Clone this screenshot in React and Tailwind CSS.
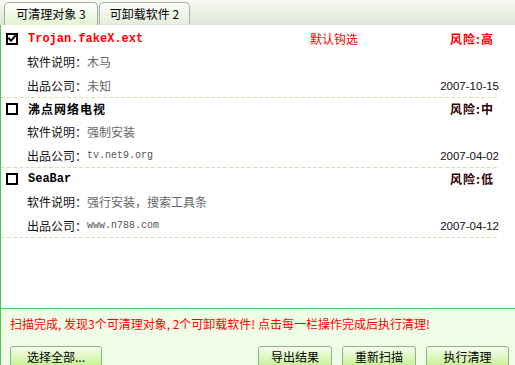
import React from "react";

const CJK = { fontFamily: '"Noto Sans CJK SC", "Noto Sans", sans-serif' };
const MONO = { fontFamily: '"Liberation Mono", "Noto Sans CJK SC", monospace' };
const SANS = { fontFamily: '"Liberation Sans", Arial, sans-serif' };

function Check({ checked }) {
  return (
    <svg width="12" height="12" viewBox="0 0 12 12" className="shrink-0">
      <rect x="1" y="1" width="10" height="10" fill="#fff" stroke="#000" strokeWidth="2" />
      {checked && (
        <path d="M3 5.5 L5 7.8 L9 3.2" fill="none" stroke="#000" strokeWidth="2" strokeLinecap="square" />
      )}
    </svg>
  );
}

function Block({ checked, title, titleMono, titleRed, flag, risk, riskRed, desc, company, companyMono, date }) {
  return (
    <div className="mr-[16px]">
      <div className="h-[22px] flex items-center pl-[5px]">
        <Check checked={checked} />
        <div
          className={`ml-[10px] w-[282px] text-[12px] leading-[16px] font-bold ${titleRed ? "text-[#ff0000]" : "text-black"} ${titleMono ? "" : "tracking-[1px]"}`}
          style={titleMono ? MONO : CJK}
        >
          {title}
        </div>
        <div className="text-[12px] leading-[16px] text-[#ff0000]" style={CJK}>
          {flag}
        </div>
        <div className="flex-1" />
        <div
          className={`pr-[5px] text-[12px] leading-[16px] font-bold tracking-[1px] ${riskRed ? "text-[#ff0000]" : "text-[#330000]"}`}
          style={CJK}
        >
          风险:{risk}
        </div>
      </div>
      <div className="h-[24px] flex items-center pl-[26px] text-[12px] leading-[16px]" style={CJK}>
        <span className="text-[#111]">软件说明：</span>
        <span className="text-[#666]">{desc}</span>
      </div>
      <div className="h-[23px] flex items-center pl-[26px] text-[12px] leading-[16px]" style={CJK}>
        <span className="text-[#111]">出品公司：</span>
        <span className={companyMono ? "text-[10px] text-[#555]" : "text-[#666]"} style={companyMono ? MONO : CJK}>
          {company}
        </span>
        <div className="flex-1" />
        <span className="text-[11.5px] text-[#111]" style={SANS}>
          {date}
        </span>
      </div>
      <div className="h-[1px] bg-[linear-gradient(to_right,#deddbe_4px,transparent_4px)] bg-[length:6px_1px] bg-repeat-x" />
    </div>
  );
}

function Btn({ children, w }) {
  return (
    <div
      className={`${w} h-[22px] shrink-0 flex items-center justify-center rounded-[3px] border border-[#8fb38c] bg-gradient-to-b from-[#f6fdee] to-[#c4f18e] text-[12px] leading-[16px] text-black`}
      style={CJK}
    >
      {children}
    </div>
  );
}

export default function App() {
  return (
    <div className="w-[515px] h-[365px] overflow-hidden flex flex-col bg-white" style={CJK}>
      <div className="h-[25px] shrink-0 flex items-end pl-[4px] gap-[1px] bg-gradient-to-b from-[#f8fbf5] to-[#dde4d6]">
        <div className="w-[94px] h-[23px] flex items-center justify-center rounded-t-[5px] border border-b-0 border-[#a2ac9e] bg-gradient-to-b from-[#ffffff] to-[#e2f4cf] text-[12px] leading-[16px] text-black">
          可清理对象 3
        </div>
        <div className="w-[91px] h-[22px] mb-[1px] flex items-center justify-center rounded-t-[5px] border border-b-0 border-[#a8b2a4] bg-gradient-to-b from-[#fcfdfa] to-[#e5eedb] text-[12px] leading-[16px] text-black">
          可卸载软件 2
        </div>
      </div>
      <div className="h-[283px] shrink-0 border-l border-[#4cc94c] bg-white pt-[3px]">
        <Block
          checked
          title="Trojan.fakeX.ext"
          titleMono
          titleRed
          flag="默认钩选"
          risk="高"
          riskRed
          desc="木马"
          company="未知"
          date="2007-10-15"
        />
        <Block
          title="沸点网络电视"
          risk="中"
          desc="强制安装"
          company="tv.net9.org"
          companyMono
          date="2007-04-02"
        />
        <Block
          title="SeaBar"
          titleMono
          risk="低"
          desc="强行安装，搜索工具条"
          company="www.n788.com"
          companyMono
          date="2007-04-12"
        />
      </div>
      <div className="flex-1 border-l border-t border-[#4cc94c] bg-[#effde6] flex flex-col">
        <div className="pt-[7px] pl-[9px] h-[23px] text-[12px] leading-[16px] text-[#ff0000]">
          扫描完成, 发现3个可清理对象, 2个可卸载软件! 点击每一栏操作完成后执行清理!
        </div>
        <div className="mt-[14px] flex pl-[9px] pr-[6px]">
          <Btn w="w-[92px]">选择全部...</Btn>
          <div className="flex-1" />
          <div className="flex gap-[10px]">
            <Btn w="w-[74px]">导出结果</Btn>
            <Btn w="w-[74px]">重新扫描</Btn>
            <Btn w="w-[83px]">执行清理</Btn>
          </div>
        </div>
      </div>
    </div>
  );
}
